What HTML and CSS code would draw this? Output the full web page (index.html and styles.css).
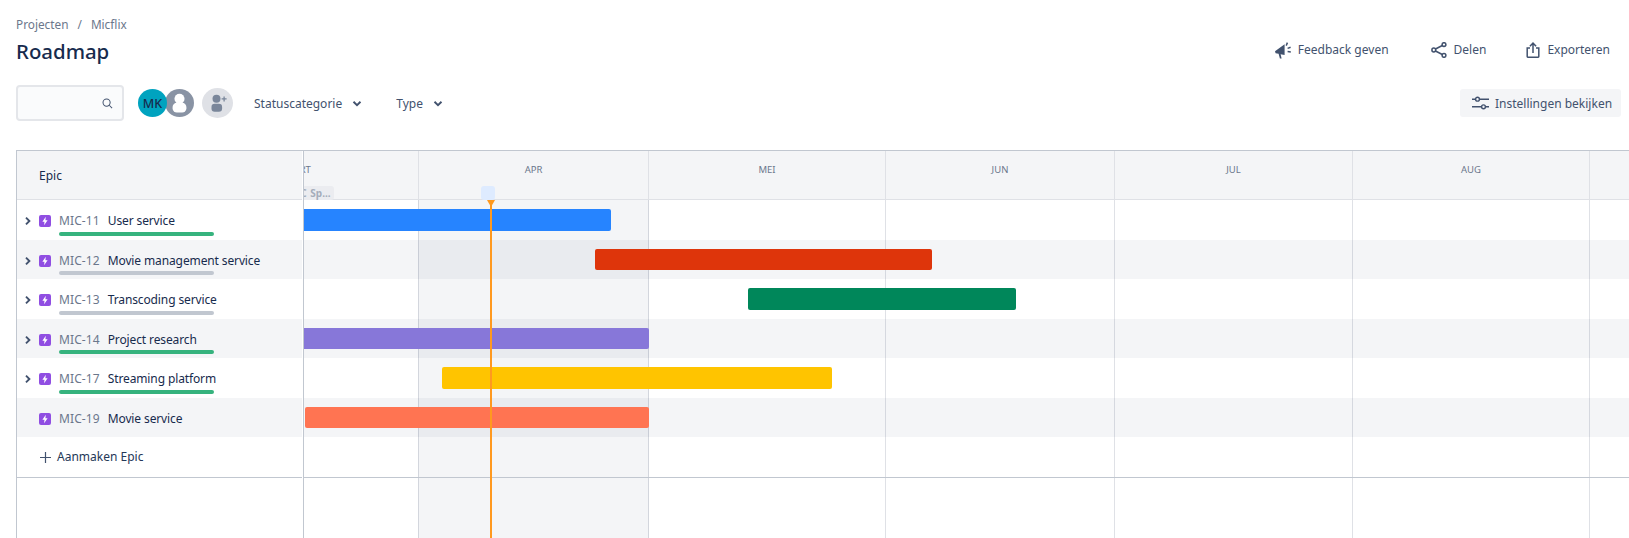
FILE: index.html
```html
<!DOCTYPE html>
<html lang="nl">
<head>
<meta charset="utf-8">
<title>Roadmap</title>
<link rel="stylesheet" href="styles.css">
</head>
<body>
<div class="page">
  <header class="top">
    <div class="titles">
      <nav class="crumbs"><span>Projecten</span><span class="sep">/</span><span>Micflix</span></nav>
      <h1 class="title">Roadmap</h1>
    </div>
    <div class="actions">
      <span class="action act-feedback"><svg class="ic-feedback" viewBox="0 0 18 18"><path d="M1 10.2 10.6 3.2V14L6.6 13.2 7.6 17.4 5.9 17.6 4.6 12.8 1.6 12.2Z" fill="#42526e"/><path d="M12.2 4.6 13.4 1.6M13.6 7.4 16.6 6.2M13.6 10.6 16.8 11" stroke="#42526e" stroke-width="1.5" fill="none"/></svg>Feedback geven</span>
      <span class="action act-share"><svg class="ic-share" viewBox="0 0 16 16" fill="none" stroke="#42526e" stroke-width="1.5"><circle cx="2.8" cy="8" r="1.9"/><circle cx="13" cy="2.6" r="1.9"/><circle cx="13" cy="13.4" r="1.9"/><path d="M4.5 7 11.3 3.5M4.5 9 11.3 12.5"/></svg>Delen</span>
      <span class="action act-export"><svg class="ic-export" viewBox="0 0 14 16" fill="none" stroke="#42526e" stroke-width="1.5"><path d="M4 6H1.2V14.6A.6.6 0 0 0 1.8 15.2H12.2A.6.6 0 0 0 12.8 14.6V6H10"/><path d="M7 11V1.4M3.9 4.2 7 1.1 10.1 4.2"/></svg>Exporteren</span>
    </div>
  </header>

  <div class="toolbar">
    <div class="search"><svg class="ic-search" viewBox="0 0 12 12" fill="none" stroke="#42526e" stroke-width="1.1"><circle cx="5" cy="5" r="3.9"/><path d="M7.9 7.9 11 11"/></svg></div>
    <div class="avatars">
      <span class="avatar av-mk">MK</span>
      <span class="avatar av-user"><svg viewBox="0 0 30 30"><circle cx="15" cy="10.5" r="5.4" fill="#fff"/><rect x="7.6" y="14.6" width="14.8" height="10.6" rx="4.6" fill="#fff"/></svg></span>
    </div>
    <span class="avatar av-add"><svg viewBox="0 0 30 30"><circle cx="14" cy="10.8" r="4" fill="#7a869a"/><rect x="9" y="15.8" width="10.6" height="8" rx="3.2" fill="#7a869a"/><path d="M21.6 8.4v5M19.1 10.9h5" stroke="#7a869a" stroke-width="1.3"/></svg></span>
    <span class="filter filter-status">Statuscategorie<svg class="ic-chev" viewBox="0 0 10 8" fill="none" stroke="#42526e" stroke-width="1.9"><path d="M1.5 1.8 5 5.2 8.5 1.8"/></svg></span>
    <span class="filter">Type<svg class="ic-chev" viewBox="0 0 10 8" fill="none" stroke="#42526e" stroke-width="1.9"><path d="M1.5 1.8 5 5.2 8.5 1.8"/></svg></span>
    <span class="settings"><svg class="ic-sliders" viewBox="0 0 17 14" fill="none" stroke="#42526e" stroke-width="1.4"><path d="M0 3.2H3.6M7.4 3.2H17M0 10.8H9.6M13.4 10.8H17"/><circle cx="5.5" cy="3.2" r="1.9"/><circle cx="11.5" cy="10.8" r="1.9"/></svg>Instellingen bekijken</span>
  </div>

  <section class="board">
    <div class="side">
      <div class="side-head">Epic</div>
      <div class="epic">
        <svg class="ic-expand" viewBox="0 0 8 10" fill="none" stroke="#42526e" stroke-width="1.9"><path d="M2 1.6 5.4 5 2 8.4"/></svg>
        <svg class="ic-epic" viewBox="0 0 12 12"><rect width="12" height="12" rx="2" fill="#904ee2"/><path d="M6.8 1.8 3.4 6.7H5.5L5.1 10.2 8.6 5.3H6.4Z" fill="#fff"/></svg>
        <span class="key">MIC-11</span><span class="name">User service</span>
        <span class="progress done"></span>
      </div>
      <div class="epic alt">
        <svg class="ic-expand" viewBox="0 0 8 10" fill="none" stroke="#42526e" stroke-width="1.9"><path d="M2 1.6 5.4 5 2 8.4"/></svg>
        <svg class="ic-epic" viewBox="0 0 12 12"><rect width="12" height="12" rx="2" fill="#904ee2"/><path d="M6.8 1.8 3.4 6.7H5.5L5.1 10.2 8.6 5.3H6.4Z" fill="#fff"/></svg>
        <span class="key">MIC-12</span><span class="name">Movie management service</span>
        <span class="progress"></span>
      </div>
      <div class="epic">
        <svg class="ic-expand" viewBox="0 0 8 10" fill="none" stroke="#42526e" stroke-width="1.9"><path d="M2 1.6 5.4 5 2 8.4"/></svg>
        <svg class="ic-epic" viewBox="0 0 12 12"><rect width="12" height="12" rx="2" fill="#904ee2"/><path d="M6.8 1.8 3.4 6.7H5.5L5.1 10.2 8.6 5.3H6.4Z" fill="#fff"/></svg>
        <span class="key">MIC-13</span><span class="name">Transcoding service</span>
        <span class="progress"></span>
      </div>
      <div class="epic alt">
        <svg class="ic-expand" viewBox="0 0 8 10" fill="none" stroke="#42526e" stroke-width="1.9"><path d="M2 1.6 5.4 5 2 8.4"/></svg>
        <svg class="ic-epic" viewBox="0 0 12 12"><rect width="12" height="12" rx="2" fill="#904ee2"/><path d="M6.8 1.8 3.4 6.7H5.5L5.1 10.2 8.6 5.3H6.4Z" fill="#fff"/></svg>
        <span class="key">MIC-14</span><span class="name">Project research</span>
        <span class="progress done"></span>
      </div>
      <div class="epic">
        <svg class="ic-expand" viewBox="0 0 8 10" fill="none" stroke="#42526e" stroke-width="1.9"><path d="M2 1.6 5.4 5 2 8.4"/></svg>
        <svg class="ic-epic" viewBox="0 0 12 12"><rect width="12" height="12" rx="2" fill="#904ee2"/><path d="M6.8 1.8 3.4 6.7H5.5L5.1 10.2 8.6 5.3H6.4Z" fill="#fff"/></svg>
        <span class="key">MIC-17</span><span class="name">Streaming platform</span>
        <span class="progress done"></span>
      </div>
      <div class="epic alt leaf">
        <svg class="ic-epic" viewBox="0 0 12 12"><rect width="12" height="12" rx="2" fill="#904ee2"/><path d="M6.8 1.8 3.4 6.7H5.5L5.1 10.2 8.6 5.3H6.4Z" fill="#fff"/></svg>
        <span class="key">MIC-19</span><span class="name">Movie service</span>
      </div>
      <div class="epic create"><svg class="ic-plus" viewBox="0 0 11 11" fill="none" stroke="#42526e" stroke-width="1.2"><path d="M5.5 0V11M0 5.5H11"/></svg>Aanmaken Epic</div>
    </div>

    <div class="chart">
      <div class="months">
        <div class="month first"><div class="month-label">MRT</div><div class="month-body"></div></div>
        <div class="month now"><div class="month-label">APR</div><div class="month-body"></div></div>
        <div class="month"><div class="month-label">MEI</div><div class="month-body"></div></div>
        <div class="month"><div class="month-label">JUN</div><div class="month-body"></div></div>
        <div class="month"><div class="month-label">JUL</div><div class="month-body"></div></div>
        <div class="month"><div class="month-label">AUG</div><div class="month-body"></div></div>
        <div class="month"><div class="month-label">SEP</div><div class="month-body"></div></div>
      </div>
      <div class="sprint-chip">MIC Sp...</div>
      <div class="today-chip"></div>
      <div class="lanes">
        <div class="lane"><span class="bar" style="margin-left:-10px;width:317px;background:#2684ff"></span></div>
        <div class="lane alt"><span class="bar" style="margin-left:291px;width:337px;background:#de350b"></span></div>
        <div class="lane"><span class="bar" style="margin-left:444px;width:268px;background:#00875a"></span></div>
        <div class="lane alt"><span class="bar" style="margin-left:-10px;width:355px;background:#8777d9"></span></div>
        <div class="lane"><span class="bar" style="margin-left:138px;width:390px;background:#ffc400"></span></div>
        <div class="lane alt"><span class="bar" style="margin-left:1px;width:344px;background:#ff7452"></span></div>
        <div class="lane last"></div>
      </div>
      <div class="today"><svg class="today-head" viewBox="0 0 8 7"><path d="M0 0H8L4 7Z" fill="#ff991f"/></svg></div>
    </div>
  </section>
</div>
</body>
</html>
```

FILE: styles.css
```css
* { box-sizing: border-box; }
html, body { margin: 0; height: 100%; overflow: hidden; background: #fff; }
body { font-family: "Noto Sans", "Open Sans", sans-serif; font-size: 12px; color: #172b4d; }
svg { display: block; flex: none; }

.page { height: 538px; display: flex; flex-direction: column; padding-left: 16px; overflow: hidden; }

/* top */
.top { height: 85px; display: flex; justify-content: space-between; padding-right: 19px; flex: none; }
.titles { padding-top: 15px; }
.crumbs { display: flex; gap: 8px; color: #6b778c; font-size: 11.8px; line-height: 19px; }
.sep { padding: 0 1px; }
.title { margin: 3px 0 0; font-size: 20.4px; line-height: 28px; font-weight: 500; color: #172b4d; }
.actions { display: flex; padding-top: 39px; height: 60px; align-items: center; color: #42526e; font-size: 12px; }
.action { display: flex; align-items: center; gap: 6px; }
.act-feedback { margin-right: 42px; }
.act-feedback svg { margin-left: -1px; }
.act-share { margin-right: 40px; gap: 7px; }
.act-export { gap: 7px; }
.ic-feedback { width: 18px; height: 18px; }
.ic-share { width: 16px; height: 16px; }
.ic-export { width: 14px; height: 16px; }

/* toolbar */
.toolbar { height: 65px; flex: none; display: flex; align-items: flex-start; padding-right: 8px; color: #42526e; }
.search { width: 108px; height: 36px; background: #fafbfc; border: 2px solid #e4e6ea; border-radius: 4px; display: flex; align-items: center; justify-content: flex-end; padding-right: 9px; }
.ic-search { width: 11px; height: 11px; }
.avatars { display: flex; margin: 4px 0 0 14px; }
.avatar { display: flex; align-items: center; justify-content: center; border-radius: 50%; }
.av-mk { width: 29px; height: 28px; background: #00a3bf; color: #172b4d; font-size: 12.5px; font-weight: 500; position: relative; z-index: 1; }
.av-user { width: 29px; height: 28px; margin-left: -2px; background: #8993a4; }
.av-user svg { width: 29px; height: 28px; }
.av-add { width: 31px; height: 30px; margin: 3px 0 0 8px; background: #dfe1e6; }
.av-add svg { width: 31px; height: 30px; }
.filter { display: flex; align-items: center; height: 38px; line-height: 38px; font-size: 12px; }
.filter-status { margin: 0 34px 0 21px; }
.ic-chev { width: 10px; height: 8px; margin-left: 10px; }
.settings { margin-left: auto; margin-top: 4px; height: 28px; width: 161px; background: #f4f5f7; border-radius: 3px; display: flex; align-items: center; gap: 6px; padding-left: 12px; white-space: nowrap; }
.ic-sliders { width: 17px; height: 14px; }

/* board */
.board { flex: 1; display: flex; border-top: 1px solid #c1c7d0; border-left: 1px solid #c1c7d0; min-height: 0; }
.side { width: 287px; flex: none; border-right: 1px solid #c1c7d0; padding-right: 1px; }
.side-head { height: 49px; background: #f4f5f7; border-bottom: 1px solid #dfe1e6; padding-left: 22px; line-height: 49px; }
.epic { height: 39.57px; display: flex; align-items: flex-start; padding: 12px 0 0 7px; position: relative; line-height: 18px; white-space: nowrap; }
.epic.alt { background: #f4f5f7; }
.ic-expand { width: 8px; height: 10px; margin: 4px 7px 0 0; }
.ic-epic { width: 12px; height: 12px; margin: 3px 8px 0 0; }
.leaf { padding-left: 22px; }
.key { color: #6b778c; margin-right: 8px; letter-spacing: 0.1px; }
.name { letter-spacing: -0.12px; }
.progress { position: absolute; left: 42px; bottom: 4px; width: 155px; height: 4px; border-radius: 2px; background: #c1c7d0; }
.progress.done { background: #36b37e; }
.create { padding-left: 23px; gap: 6px; align-items: center; padding-top: 0; height: 39.5px; border-bottom: 0; color: #253858; box-shadow: 0 1px 0 #c1c7d0; }
.ic-plus { width: 11px; height: 11px; }

/* chart */
.chart { flex: 1; position: relative; overflow: hidden; min-width: 0; }
.months { position: absolute; top: 0; bottom: 0; left: -122px; display: grid; grid-template-columns: 237px 230px 237px 229px 238px 237px 237px; }
.month { display: flex; flex-direction: column; }
.month-label { height: 49px; background: #f4f5f7; border-bottom: 1px solid #dfe1e6; border-right: 1px solid #dfe1e6; text-align: center; font-size: 9.5px; line-height: 38px; color: #6b778c; }
.first .month-label { padding-left: 2px; }
.month-body { flex: 1; border-right: 1px solid #dfe1e6; }
.now .month-body { background: #f4f5f7; border-right-color: #d3d6dd; }
.first .month-body { border-right-color: #d3d6dd; }
.sprint-chip { position: absolute; top: 35px; left: -22px; width: 52px; height: 14px; padding: 0 5px; background: #ebecf0; border-radius: 3px; color: #a5adba; font-size: 10px; font-weight: 700; line-height: 14px; white-space: nowrap; overflow: hidden; text-align: right; word-spacing: 1px; }
.today-chip { position: absolute; top: 35px; left: 177px; width: 14px; height: 14px; background: #deebff; border-radius: 3px; }
.lanes { position: absolute; top: 49px; left: 0; right: 0; }
.lane { height: 39.57px; display: flex; align-items: center; }
.lane.alt { background: rgba(9, 30, 66, 0.045); }
.lane.last { height: 39.5px; box-shadow: 0 1px 0 #c1c7d0; }
.bar { display: block; height: 21.6px; border-radius: 2px; flex: none; }
.today { position: absolute; top: 49px; bottom: 0; left: 186px; width: 2px; background: #ff991f; }
.today-head { position: absolute; top: 0; left: -3px; width: 8px; height: 7px; }
```
